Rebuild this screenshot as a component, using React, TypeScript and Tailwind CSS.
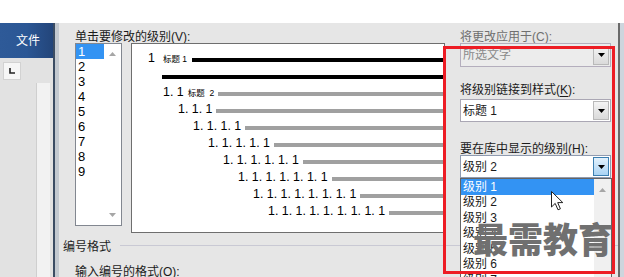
import React from "react"

const levelItems = ["1", "2", "3", "4", "5", "6", "7", "8", "9"]
const dropItems = ["级别 1", "级别 2", "级别 3", "级别 4", "级别 5", "级别 6", "级别 7"]

// indent for rows 2..9 of the preview
const rowPads = ["pl-[31px]", "pl-[46px]", "pl-[61px]", "pl-[76px]", "pl-[91px]", "pl-[106px]", "pl-[121px]", "pl-[136px]"]

function ones(n: number) {
  return Array(n).fill("1").join(". ")
}

function Arrow({ className }: { className?: string }) {
  return (
    <svg width="7" height="4" viewBox="0 0 7 4" className={className}>
      <path d="M0 0 H7 L3.5 4 Z" fill="currentColor" />
    </svg>
  )
}

function Combo({ text, variant }: { text: string; variant: "disabled" | "normal" | "active" }) {
  return (
    <div
      className={
        variant === "disabled"
          ? "flex h-full w-full items-center border border-[#b4aebd] bg-[#ececec]"
          : variant === "active"
          ? "flex h-full w-full items-center border border-[#8f9bb0] bg-white"
          : "flex h-full w-full items-center border border-[#aaa7b4] bg-white"
      }
    >
      <span className={variant === "disabled" ? "flex-1 pl-[2px] text-[12px] text-[#8a8a8a]" : "flex-1 pl-[2px] text-[12px] text-[#1a1a1a]"}>
        {text}
      </span>
      <div
        className={
          variant === "active"
            ? "mr-[1px] flex h-[19px] w-[16px] items-center justify-center border border-[#3c7fb1] bg-gradient-to-b from-[#e3f1fc] to-[#a9d3f3] text-black"
            : "mr-[1px] flex h-[19px] w-[16px] items-center justify-center border border-[#b9b9b9] bg-gradient-to-b from-[#f4f4f4] to-[#dadada] text-black"
        }
      >
        <Arrow />
      </div>
    </div>
  )
}

function Label({ children, muted }: { children: React.ReactNode; muted?: boolean }) {
  return <span className={muted ? "text-[12px] leading-[16px] text-[#6f6f6f]" : "text-[12px] leading-[16px] text-[#1b1b1b]"}>{children}</span>
}

function Preview() {
  return (
    <div className="ml-[9px] flex h-[190px] w-[314px] flex-col border border-[#6e6e6e] bg-white pt-[3px] pr-[1px]">
      <div className="flex h-[17px] items-end pl-[16px]">
        <span className="text-[12.4px] leading-[12px] text-black">1</span>
        <span className="ml-[8px] text-[8.5px] leading-[10px] text-black">标题 1</span>
        <div className="mb-[2px] ml-[5px] h-[4px] flex-1 bg-black" />
      </div>
      <div className="flex h-[17px] items-end pl-[30px]">
        <div className="mb-[2px] h-[4px] flex-1 bg-black" />
      </div>
      {rowPads.map((pad, i) => (
        <div key={i} className={"flex h-[17px] items-end " + pad}>
          <span className="whitespace-pre text-[12.4px] leading-[12px] text-black">{ones(i + 2)}</span>
          {i === 0 && <span className="ml-[4px] whitespace-pre text-[8.5px] leading-[10px] text-black">标题  2</span>}
          <div className="mb-[2px] ml-[4px] h-[4px] flex-1 bg-[#a0a0a0]" />
        </div>
      ))}
    </div>
  )
}

export default function App() {
  return (
    <div className="relative flex h-[277px] w-[624px] flex-col overflow-hidden bg-white font-['Liberation_Sans','Noto_Sans_CJK_SC',sans-serif]">
      <div className="h-[23px] shrink-0 bg-white" />
      <div className="flex flex-1">
        {/* word window behind the dialog */}
        <div className="flex w-[53px] flex-col bg-[#e2e2e2]">
          <div className="flex h-[35px] items-center bg-gradient-to-r from-[#2e5a98] via-[#2b5795] to-[#23457a] pl-[16px] text-[12px] text-white">
            文件
          </div>
          <div className="mt-[4px] ml-[3px] flex h-[18px] w-[18px] items-center justify-center border border-[#d2d2d2] bg-[#f6f6f6]">
            <svg width="6" height="6" viewBox="0 0 6 6">
              <path d="M1 0 V5 H6" stroke="#222" strokeWidth="1.6" fill="none" />
            </svg>
          </div>
          <div className="mt-[3px] ml-[36px] w-[14px] flex-1 border-l border-[#cfcfcf] bg-[#f2f2f2]" />
        </div>
        <div className="w-[2px] bg-[#3b4c63]" />
        <div className="w-[4px] bg-[#c3c9d0]" />

        {/* dialog */}
        <div className="flex w-[559px] flex-col bg-[#e6e6e6]">
          <div className="flex h-[210px]">
            <div className="flex flex-col pl-[16px]">
              <div className="h-[20px] pt-[1px]">
                <Label>
                  单击要修改的级别(<span className="underline underline-offset-2">V</span>):
                </Label>
              </div>
              <div className="flex items-start">
                <div className="flex h-[183px] w-[47px] border border-[#828790] bg-white">
                  <div className="flex w-[28px] flex-col">
                    {levelItems.map((n, i) => (
                      <div
                        key={n}
                        className={
                          i === 0
                            ? "h-[15px] bg-[#3393f3] pl-[2px] text-[13px] leading-[15px] text-white"
                            : "h-[15px] pl-[2px] text-[13px] leading-[15px] text-black"
                        }
                      >
                        {n}
                      </div>
                    ))}
                  </div>
                  <div className="flex flex-1 flex-col items-center justify-between py-[8px] text-[#a6a6a6]">
                    <Arrow className="rotate-180" />
                    <Arrow />
                  </div>
                </div>
                <Preview />
              </div>
            </div>

            {/* right pane */}
            <div className="ml-[15px] flex w-[152px] flex-col">
              <div className="h-[20px] pt-[1px]">
                <Label muted>
                  将更改应用于(<span className="underline underline-offset-2">C</span>):
                </Label>
              </div>
              <div className="h-[24px] w-[151px]">
                <Combo text="所选文字" variant="disabled" />
              </div>
              <div className="h-[32px] pt-[10px]">
                <Label>
                  将级别链接到样式(<span className="underline underline-offset-2">K</span>):
                </Label>
              </div>
              <div className="h-[23px] w-[151px]">
                <Combo text="标题 1" variant="normal" />
              </div>
              <div className="h-[33px] pt-[14px]">
                <Label>
                  要在库中显示的级别(<span className="underline underline-offset-2">H</span>):
                </Label>
              </div>
              <div className="relative h-[23px] w-[151px]">
                <Combo text="级别 2" variant="active" />
                {/* open dropdown list */}
                <div className="absolute top-full left-0 z-10 flex h-[110px] w-[152px] border border-[#646464] bg-white">
                  <div className="flex flex-1 flex-col">
                    {dropItems.map((t, i) => (
                      <div
                        key={t}
                        className={
                          i === 0
                            ? "h-[16px] bg-[#3393f3] pl-[2px] text-[12px] leading-[16px] text-white"
                            : "h-[15.6px] pl-[2px] text-[12px] leading-[15.6px] text-[#1a1a1a]"
                        }
                      >
                        {t}
                      </div>
                    ))}
                  </div>
                  <div className="flex w-[17px] justify-center bg-[#f0f0f0] pt-[9px] text-[#a6a6a6]">
                    <Arrow className="rotate-180" />
                  </div>
                </div>
              </div>
            </div>
          </div>

          <div className="mt-[5px] flex h-[18px] items-center pl-[4px]">
            <span className="text-[12px] leading-[16px] text-[#1e1e1e]">编号格式</span>
            <div className="mt-[-3px] ml-[9px] h-px flex-1 bg-[#c9c9d4]" />
          </div>
          <div className="mt-[3px] h-[18px] pl-[16px]">
            <Label>
              输入编号的格式(<span className="underline underline-offset-2">O</span>):
            </Label>
          </div>
        </div>
        <div className="w-[2px] bg-[#6a6a6a]" />
        <div className="flex-1 bg-[#cdd5dd]" />
      </div>

      {/* red highlight box */}
      <div className="pointer-events-none absolute top-[46px] left-[443px] z-20 h-[228px] w-[172px] border-[3px] border-[#ed1c24]" />

      {/* watermark */}
      <div className="pointer-events-none absolute top-[218px] left-[473px] z-20 font-['Noto_Sans_CJK_SC',sans-serif] text-[35px] leading-[40px] font-black text-[#707070]">
        最需教育
      </div>

      {/* mouse pointer */}
      <svg className="absolute top-[191px] left-[551px] z-20" width="13" height="20" viewBox="0 0 13 20">
        <path d="M0.5 0.5 V16 L4.2 12.4 L7 18.8 L9.4 17.8 L6.7 11.6 H11.8 Z" fill="white" stroke="#222" strokeWidth="1" />
      </svg>
    </div>
  )
}
